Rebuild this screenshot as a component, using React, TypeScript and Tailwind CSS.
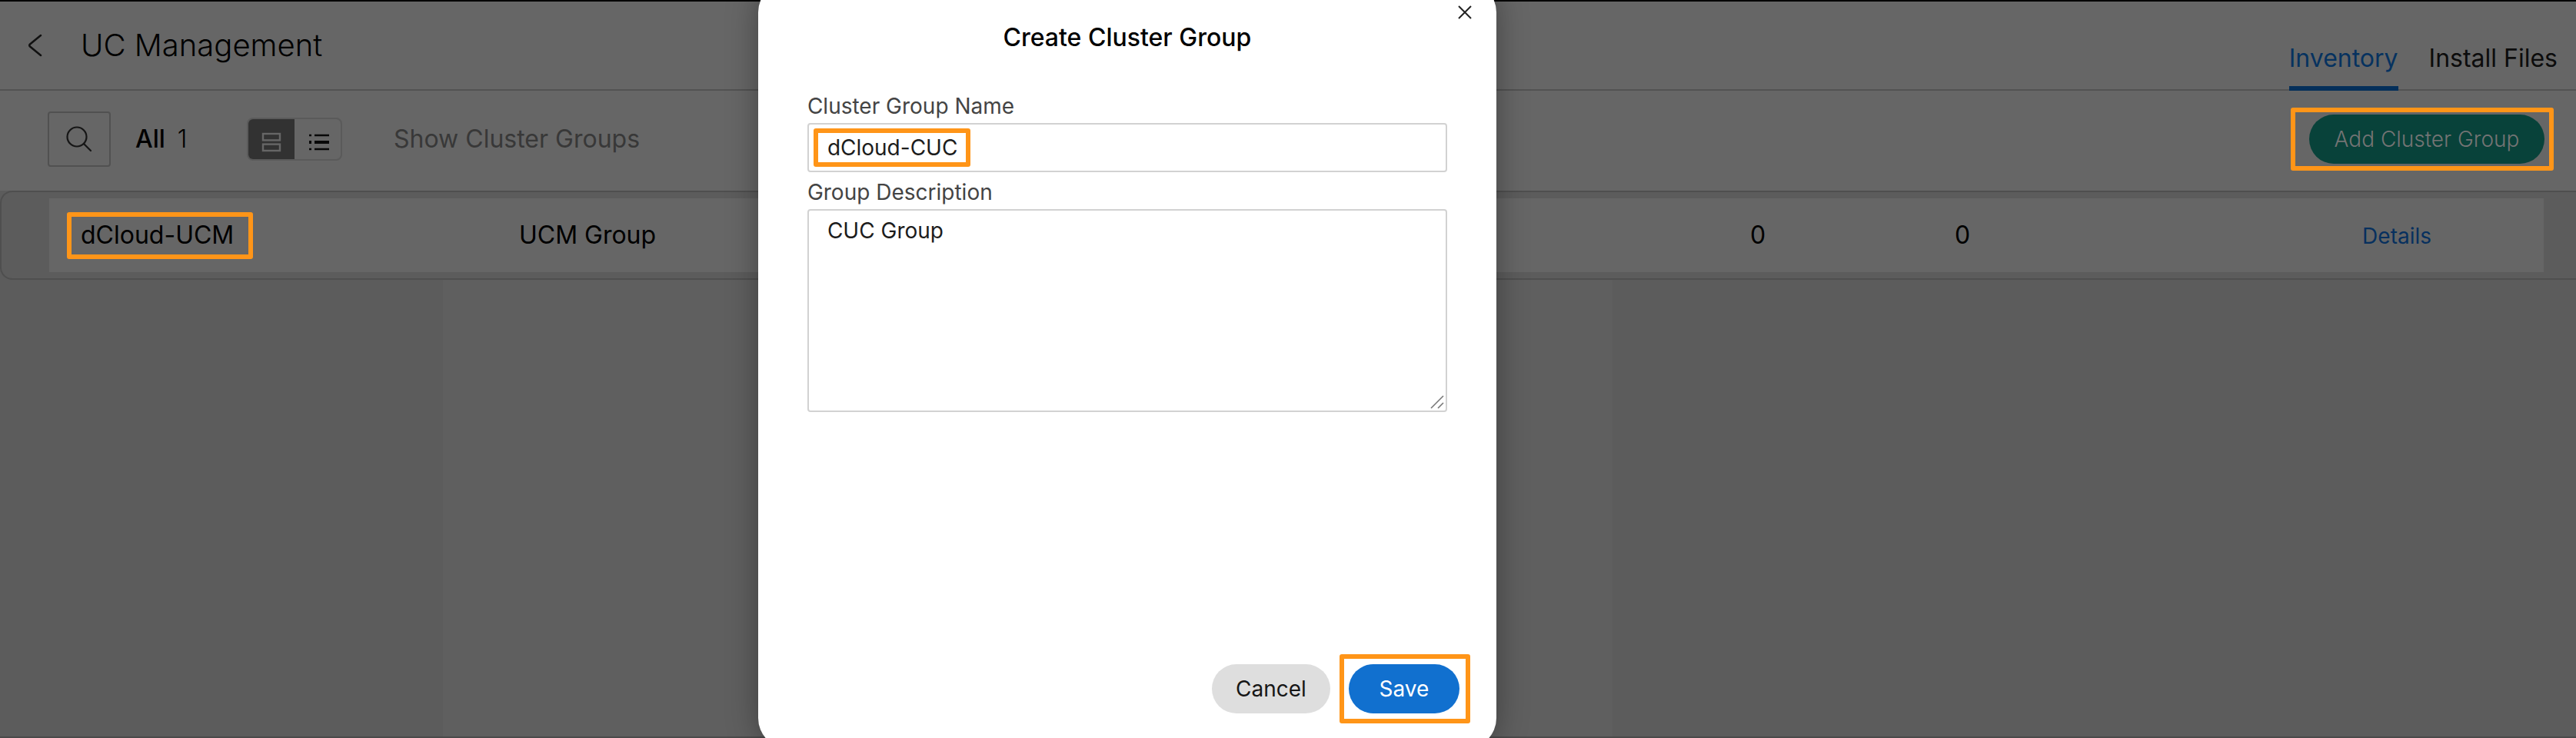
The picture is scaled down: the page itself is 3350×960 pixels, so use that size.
import type { ReactNode } from "react";

function Highlight({ className, children }: { className: string; children: ReactNode }) {
  return <div className={`rounded-[3px] border-6 border-[#ff9518] ${className}`}>{children}</div>;
}

function Header() {
  return (
    <header className="flex h-[118px] items-stretch justify-between border-t-2 border-b-2 border-t-black border-b-[#525252] bg-[#666666] pr-6 pl-9">
      <div className="flex items-center gap-[50px]">
        <button type="button" aria-label="Back">
          <svg width="19" height="30" viewBox="0 0 19 30" fill="none" stroke="#111" strokeWidth="2.5" strokeLinecap="round" strokeLinejoin="round">
            <path d="M17 2 L3 13.5 Q1.5 15 3 16.5 L17 28" />
          </svg>
        </button>
        <h1 className="text-[40px] leading-[48px] font-light text-black">UC Management</h1>
      </div>
      <nav className="flex items-end gap-10 text-[32px] leading-[40px]">
        <a href="#inventory" className="-mb-0.5 border-b-6 border-[#042f5a] pb-4 text-[#06325f]">Inventory</a>
        <a href="#files" className="pb-5 text-[#0c0c0c]">Install Files</a>
      </nav>
    </header>
  );
}

function Toolbar() {
  return (
    <div className="flex h-[130px] items-center justify-between bg-[#666666] pr-[29px] pb-1 pl-[62px]">
      <div className="flex items-center">
        <button type="button" aria-label="Search" className="flex h-[72px] w-[82px] items-center justify-center rounded-[4px] border-2 border-[#515151]">
          <svg width="34" height="34" viewBox="0 0 34 34" fill="none" stroke="#161616" strokeWidth="2.2" strokeLinecap="round">
            <circle cx="14" cy="14" r="12.5" />
            <path d="M23.5 23.5 L32 32" />
          </svg>
        </button>
        <p className="ml-8 flex w-[145px] gap-4 text-[32px] leading-[40px] text-black">
          <span className="font-medium">All</span>
          <span className="font-light">1</span>
        </p>
        <div className="flex h-14 w-[124px] overflow-hidden rounded-[8px] border-2 border-[#5a5a5a]">
          <button type="button" aria-label="Card view" className="flex w-[60px] items-center justify-center bg-[#323232] pt-2">
            <svg width="26" height="26" viewBox="0 0 26 26" fill="none" stroke="#666666" strokeWidth="2.4">
              <rect x="2" y="2" width="22" height="8.4" />
              <rect x="2" y="15.6" width="22" height="8.4" />
            </svg>
          </button>
          <button type="button" aria-label="List view" className="flex w-[60px] items-center justify-center pt-2 pl-1">
            <svg width="26" height="22" viewBox="0 0 26 22" stroke="#080808" strokeWidth="2.6">
              <path d="M7 2H26M0 2H3M7 20H26M0 20H3" />
              <path d="M7 11H26M0 11H3" strokeWidth="4" />
            </svg>
          </button>
        </div>
        <p className="ml-[67px] text-[32px] leading-[40px] text-[#383838]">Show Cluster Groups</p>
      </div>
      <Highlight className="flex h-[82px] items-center pr-1.5 pl-[18px]">
        <button type="button" className="h-16 w-[306px] rounded-full bg-[#08423a] text-[28px] leading-[36px] font-light text-[#747474]">
          Add Cluster Group
        </button>
      </Highlight>
    </div>
  );
}

function Groups() {
  return (
    <main className="flex flex-1 flex-col bg-[#5c5c5c]">
      <div className="rounded-l-[16px] border-y-2 border-l-2 border-[#4f4f4f] py-2 pr-[42px] pl-[62px]">
        <table className="w-full table-fixed bg-[#666666] text-[32px] leading-[40px] text-black">
          <colgroup>
            <col className="w-[17.6%]" />
            <col className="w-[46.8%]" />
            <col className="w-[8.2%]" />
            <col className="w-[8.2%]" />
            <col />
          </colgroup>
          <tbody>
            <tr className="h-24">
              <td className="pl-[23px]">
                <Highlight className="flex h-[61px] w-[242px] items-center pl-3">dCloud-UCM</Highlight>
              </td>
              <td className="pl-10">UCM Group</td>
              <td className="text-center">0</td>
              <td className="text-center">0</td>
              <td className="pr-[146px] text-right">
                <a href="#details" className="text-[28px] text-[#07305e]">Details</a>
              </td>
            </tr>
          </tbody>
        </table>
      </div>
      <div className="flex flex-1">
        <div className="ml-[17.2%] w-[45.4%] bg-[#5f5f5f]" />
      </div>
      <div className="h-0.5 bg-[#4a4a4a]" />
    </main>
  );
}

function CreateGroupDialog() {
  return (
    <div
      role="dialog"
      aria-labelledby="dialog-title"
      className="absolute top-[-24px] left-[29.43%] flex h-[998px] w-[960px] flex-col rounded-[40px] bg-white px-16 shadow-[0_0_40px_rgba(0,0,0,0.35)]"
    >
      <button type="button" aria-label="Close" className="absolute top-[31px] right-8">
        <svg width="18" height="18" viewBox="0 0 18 18" stroke="#222" strokeWidth="2">
          <path d="M1 1 L17 17 M17 1 L1 17" />
        </svg>
      </button>
      <h2 id="dialog-title" className="mt-[53px] text-center text-[32px] leading-[40px] font-medium text-black">
        Create Cluster Group
      </h2>
      <label htmlFor="group-name" className="mt-[51px] text-[28px] leading-[36px] text-[#444444]">
        Cluster Group Name
      </label>
      <div className="mt-1 flex h-16 items-center rounded-[4px] border-2 border-[#d2d2d2] px-1.5">
        <Highlight className="flex h-[50px] w-[204px]">
          <input
            id="group-name"
            defaultValue="dCloud-CUC"
            className="w-full bg-transparent pl-3 text-[28px] leading-[36px] text-[#1c1c1c] outline-none"
          />
        </Highlight>
      </div>
      <label htmlFor="group-description" className="mt-2 text-[28px] leading-[36px] text-[#444444]">
        Group Description
      </label>
      <textarea
        id="group-description"
        defaultValue="CUC Group"
        className="mt-1 h-[264px] resize-none rounded-[4px] border-2 border-[#d2d2d2] px-6 py-2 text-[28px] leading-[36px] text-[#1c1c1c] outline-none"
      />
      <svg className="pointer-events-none -mt-[22px] mr-1 self-end" width="18" height="18" viewBox="0 0 18 18" stroke="#777" strokeWidth="1.6">
        <path d="M1 17 L17 1 M10 17 L17 10" />
      </svg>
      <div className="mt-auto -mr-[30px] mb-[33px] flex items-center justify-end gap-3">
        <button type="button" className="h-16 w-[154px] rounded-full bg-[#dedede] text-[28px] leading-[36px] text-[#161616]">
          Cancel
        </button>
        <Highlight className="flex h-[90px] w-[170px] items-center pl-1.5">
          <button type="button" className="h-16 w-36 rounded-full bg-[#1170cf] text-[28px] leading-[36px] text-white">
            Save
          </button>
        </Highlight>
      </div>
    </div>
  );
}

export default function App() {
  return (
    <div className="relative flex h-screen flex-col overflow-hidden bg-[#5c5c5c] font-['Inter',sans-serif]">
      <Header />
      <Toolbar />
      <Groups />
      <CreateGroupDialog />
    </div>
  );
}
